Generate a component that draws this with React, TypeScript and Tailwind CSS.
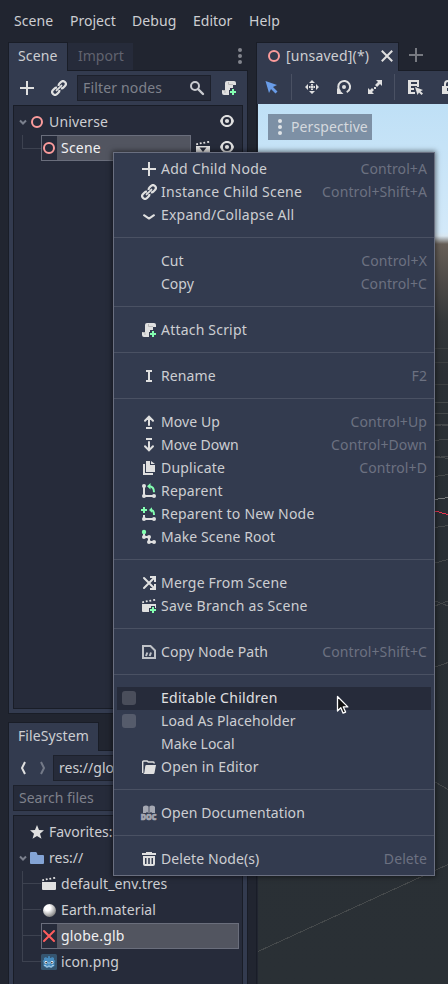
import type { ReactNode } from "react";

const LIGHT = "#e0e0e0";
const GREEN = "#84ffb1";

function Icon({ children, className = "" }: { children: ReactNode; className?: string }) {
  return (
    <svg viewBox="0 0 16 16" width="16" height="16" fill={LIGHT} className={`shrink-0 ${className}`}>
      {children}
    </svg>
  );
}

const AddIcon = () => <Icon><path d="M7 1h2v6h6v2H9v6H7V9H1V7h6z" /></Icon>;

const LinkIcon = () => (
  <Icon>
    <g transform="rotate(-45 8 8)" fill="none" stroke={LIGHT} strokeWidth="2.2">
      <path d="M6.8 9.6a2.6 2.6 0 0 1-2.3 1.200H2.400a2.800 2.800 0 0 1 0-5.600h2.100a2.800 2.800 0 0 1 2.300 1.200" />
      <path d="M9.2 9.6a2.6 2.6 0 0 0 2.300 1.200h2.100a2.800 2.800 0 0 0 0-5.600h-2.100a2.800 2.800 0 0 0-2.300 1.200" />
      <path d="M4.5 8h7" strokeLinecap="round" strokeWidth="1.800" />
    </g>
  </Icon>
);

const ExpandIcon = () => (
  <Icon><path d="M3 8.2 8 11.6l5-3.4" fill="none" stroke={LIGHT} strokeWidth="2" strokeLinecap="round" strokeLinejoin="round" /></Icon>
);

const ScriptIcon = () => (
  <Icon>
    <path d="M6 1h7a2 2 0 0 1 2 2v2h-4v3H9v2H8v5H3a2 2 0 0 1-2-2v-3h3V3a2 2 0 0 1 2-2z" />
    <path d="M8 5h4v3H8z" />
    <path d="M7.500 2v2.500H12M1.500 10.500H4v2.500" fill="none" stroke="#b8b8b8" />
    <path d="M11 9h2v2h2v2h-2v2h-2v-2H9v-2h2z" fill={GREEN} />
  </Icon>
);

const RenameIcon = () => <Icon><path d="M5 2h6v2H9v8h2v2H5v-2h2V4H5z" /></Icon>;

const MoveUpIcon = () => (
  <Icon>
    <path d="M8 11V3M4 6.8 8 2.6l4 4.2" fill="none" stroke={LIGHT} strokeWidth="2" strokeLinecap="round" />
    <path d="M5 13h6v2H5z" />
  </Icon>
);

const MoveDownIcon = () => (
  <Icon>
    <path d="M8 5v8M4 9.2l4 4.2 4-4.2" fill="none" stroke={LIGHT} strokeWidth="2" strokeLinecap="round" />
    <path d="M5 1h6v2H5z" />
  </Icon>
);

const DuplicateIcon = () => (
  <Icon><path d="M5 1h4v4h5v7H5zM10 1v3h4zM2 4h2v9h8v2H2z" /></Icon>
);

const ReparentIcon = () => (
  <Icon>
    <path d="M3 3v10h10" fill="none" stroke={LIGHT} strokeWidth="2" />
    <circle cx="3" cy="3" r="2" /><circle cx="3" cy="13" r="2" /><circle cx="13" cy="13" r="2" />
    <path d="M8 3.2c3.6 0 5 2.2 5 6" fill="none" stroke={GREEN} strokeWidth="2" />
    <path d="M9.5 0v6.4L6 3.2z" fill={GREEN} />
  </Icon>
);

const ReparentNewIcon = () => (
  <Icon>
    <path d="M3 9v4h10" fill="none" stroke={LIGHT} strokeWidth="2" />
    <circle cx="3" cy="13" r="2" /><circle cx="13" cy="13" r="2" />
    <path d="M2 1h2v2h2v2H4v2H2V5H0V3h2z" fill={GREEN} />
    <path d="M10 4c2 0 3 1.2 3 5" fill="none" stroke={GREEN} strokeWidth="2" />
    <path d="M11 1.3v5.4L8 4z" fill={GREEN} />
  </Icon>
);

const RootIcon = () => (
  <Icon>
    <path d="M3 4v4h5v5h5" fill="none" stroke={LIGHT} strokeWidth="2" />
    <circle cx="3" cy="8" r="2" /><circle cx="8" cy="8" r="2" /><circle cx="8" cy="13" r="2" /><circle cx="13" cy="13" r="2" />
    <circle cx="3" cy="3" r="2.2" fill={GREEN} />
  </Icon>
);

const MergeIcon = () => (
  <Icon>
    <path d="m3 3 10 10M3 13 13 3" fill="none" stroke={LIGHT} strokeWidth="2" strokeLinecap="round" />
    <path d="M9 1h6v6h-2V3H9zM13 9h2v6H9v-2h4z" />
  </Icon>
);

const ClapperBody = () => (
  <path d="M1 3.5l1.8-.4.4 1.7-1.8.5zM4.6 2.6l1.8-.4.4 1.7-1.8.4zM8.2 2l1.8-.3.4 1.7-1.8.3zM12 1.3l2-.3.3 1.8-1.9.3zM1 6h14v7a1 1 0 0 1-1 1H2a1 1 0 0 1-1-1z" />
);

const ClapperIcon = () => <Icon><ClapperBody /></Icon>;
const SceneOpenIcon = () => <Icon><ClapperBody /><path d="M4.5 7.5h7L8 12z" fill="#262b3a" /></Icon>;
const SaveBranchIcon = () => (
  <Icon>
    <ClapperBody />
    <path d="M10 8h4v2h2v4h-2v2h-4v-2H8v-4h2z" fill="#333b4f" />
    <path d="M11 9h2v2h2v2h-2v2h-2v-2H9v-2h2z" fill={GREEN} />
  </Icon>
);

const CopyPathIcon = () => (
  <Icon>
    <path d="M2 2h7.5L14 6.5V14H2z" fill="none" stroke="#bfc2c7" strokeWidth="2" />
    <path d="m5 12 1.300-3.500M8.700 12l1.300-3.500" stroke="#bfc2c7" strokeWidth="2" />
  </Icon>
);

const OpenFolderIcon = () => (
  <Icon>
    <path d="M1.7 14V3q0-1 1-1h3q1 0 1.5 1h5q1 0 1 1.5" fill="none" stroke={LIGHT} strokeWidth="1.4" />
    <path d="M5.5 6H15l-1.5 8q-.2 1-1.2 1H2q1-.2 1.3-1.2l1-6.8q.2-1 1.2-1z" />
  </Icon>
);

const DocIcon = () => (
  <Icon className="overflow-visible">
    <path d="M2 1.800Q5-.5 7.600 1.600V8H6.600V7H5.400v1H2zM8.400 1.600Q11-.5 14 1.800V8h-3.400V7H9.400v1h-1z" fill="#a5a8b2" />
    <text x="-.2" y="15.400" textLength="15.600" lengthAdjust="spacingAndGlyphs" fontSize="7.800" fontWeight="900" fill="#a5a8b2" stroke="#a5a8b2" strokeWidth=".7" className="font-['Noto_Sans',sans-serif]">DOC</text>
  </Icon>
);

const TrashIcon = () => (
  <Icon>
    <path d="M1 2h4V1h6v1h4v2H1zM2 5h12v8a2 2 0 0 1-2 2H4a2 2 0 0 1-2-2z" />
    <path d="M4 7h1.500v6H4zM7.200 7h1.600v6H7.200zM10.500 7H12v6h-1.500z" fill="#333b4f" />
  </Icon>
);

const NodeIcon = () => <Icon><circle cx="8" cy="8" r="5" fill="none" stroke="#fc9c9c" strokeWidth="2" /></Icon>;

const EyeIcon = () => (
  <Icon className="relative -top-px">
    <path d="M8 2C4.500 2 2 4.600 1 8c1 3.400 3.500 6 7 6s6-2.600 7-6c-1-3.400-3.500-6-7-6z" />
    <circle cx="8" cy="8" r="4.100" fill="#262b3a" />
    <circle cx="8" cy="8" r="2.100" />
  </Icon>
);

const SearchIcon = () => (
  <Icon>
    <circle cx="6" cy="6" r="4" fill="none" stroke="#c9cbd0" strokeWidth="2" />
    <path d="m9 9 5 5" stroke="#c9cbd0" strokeWidth="2.400" strokeLinecap="round" />
  </Icon>
);

const Arrow = () => (
  <svg width="8" height="8" viewBox="0 0 8 8" className="shrink-0">
    <path d="m1 2.500 3 3 3-3" fill="none" stroke="#7b808d" strokeWidth="2" />
  </svg>
);

function Kebab({ color }: { color: string }) {
  return (
    <svg width="4" height="16" viewBox="0 0 4 16" fill={color} className="shrink-0">
      <circle cx="2" cy="2" r="2" /><circle cx="2" cy="8" r="2" /><circle cx="2" cy="14" r="2" />
    </svg>
  );
}

const SNUG = "tracking-[0.1px]";
const WIDE = "tracking-[0.2px]";
const WIDER = "tracking-[0.27px]";

type Entry = { label: string; fit?: string; key?: string; icon?: ReactNode; check?: boolean; hover?: boolean } | null;

const entries: Entry[] = [
  { label: "Add Child Node", fit: WIDER, key: "Control+A", icon: <AddIcon /> },
  { label: "Instance Child Scene", fit: WIDER, key: "Control+Shift+A", icon: <LinkIcon /> },
  { label: "Expand/Collapse All", fit: WIDE, icon: <ExpandIcon /> },
  null,
  { label: "Cut", key: "Control+X" },
  { label: "Copy", key: "Control+C" },
  null,
  { label: "Attach Script", fit: WIDE, icon: <ScriptIcon /> },
  null,
  { label: "Rename", fit: SNUG, key: "F2", icon: <RenameIcon /> },
  null,
  { label: "Move Up", fit: SNUG, key: "Control+Up", icon: <MoveUpIcon /> },
  { label: "Move Down", key: "Control+Down", icon: <MoveDownIcon /> },
  { label: "Duplicate", fit: WIDE, key: "Control+D", icon: <DuplicateIcon /> },
  { label: "Reparent", fit: WIDE, icon: <ReparentIcon /> },
  { label: "Reparent to New Node", fit: WIDE, icon: <ReparentNewIcon /> },
  { label: "Make Scene Root", fit: SNUG, icon: <RootIcon /> },
  null,
  { label: "Merge From Scene", fit: WIDE, icon: <MergeIcon /> },
  { label: "Save Branch as Scene", fit: WIDER, icon: <SaveBranchIcon /> },
  null,
  { label: "Copy Node Path", fit: SNUG, key: "Control+Shift+C", icon: <CopyPathIcon /> },
  null,
  { label: "Editable Children", fit: WIDER, check: true, hover: true },
  { label: "Load As Placeholder", fit: SNUG, check: true },
  { label: "Make Local" },
  { label: "Open in Editor", fit: WIDE, icon: <OpenFolderIcon /> },
  null,
  { label: "Open Documentation", fit: SNUG, icon: <DocIcon /> },
  null,
  { label: "Delete Node(s)", fit: SNUG, key: "Delete", icon: <TrashIcon /> },
];

function ContextMenu() {
  return (
    <div className="absolute left-[113px] top-[152px] h-[724px] w-[322px] border border-[#6a6f80] bg-[#333b4f] pt-[5px] shadow-[0_0_5px_1px_rgba(0,0,0,0.5)]">
      {entries.map((e, i) =>
        e === null ? (
          <div key={i} className="h-[23px] pt-[10px]"><div className="h-px bg-[#4a5163]" /></div>
        ) : (
          <div key={i} className={`mx-[3px] flex h-[23px] items-start pl-1 pr-1 leading-[21px] ${e.hover ? "bg-[#262b3a] text-[#e0e0e2]" : ""}`}>
            <div className="flex w-5 pl-[1px] pt-1">
              {e.check && <div className={`size-[14px] rounded-[3px] ${e.hover ? "bg-[#4a4e5b]" : "bg-[#555b6b]"}`} />}
            </div>
            <div className="flex w-5 pt-[3px]">{e.icon}</div>
            <span className={`whitespace-nowrap ${e.fit ?? ""}`}>{e.label}</span>
            {e.key && <span className="ml-auto tracking-[0.1px] text-[#6c7181]">{e.key}</span>}
          </div>
        ),
      )}
    </div>
  );
}

function MenuBar() {
  return (
    <div className="flex h-[42px] shrink-0 items-center pl-[14px]">
      <span className="w-14 tracking-[0.1px]">Scene</span>
      <span className="w-[62px]">Project</span>
      <span className="w-[61px] tracking-[0.1px]">Debug</span>
      <span className="w-14">Editor</span>
      <span className="tracking-[0.1px]">Help</span>
    </div>
  );
}

function SceneDock() {
  return (
    <div className="flex h-[672px] flex-col">
      <div className="flex h-[28px] items-start">
        <div className="z-10 flex h-[29px] w-[60px] items-center border border-b-0 border-[#191d27] bg-[#333b4f] pb-[2px] pl-[9px] tracking-[0.15px]">Scene</div>
        <div className="mt-px flex h-[27px] w-[65px] items-center bg-[#262b3a] pb-[2px] pl-[10px] text-[#61636f]">Import</div>
        <div className="ml-auto mr-[6px] mt-[6px]"><Kebab color="#82858d" /></div>
      </div>
      <div className="flex min-h-0 flex-1 flex-col border border-[#191d27] bg-[#333b4f] p-1">
        <div className="flex h-[26px] items-center">
          <div className="ml-[6px] flex w-8"><AddIcon /></div>
          <div className="flex w-[26px]"><LinkIcon /></div>
          <div className="flex h-[26px] w-[134px] items-center justify-between border border-[#1d212c] bg-[#262b3a] pl-[5px] pr-[5px] tracking-[0.17px] text-[#7e818b]">
            Filter nodes <SearchIcon />
          </div>
          <div className="ml-[10px] flex"><ScriptIcon /></div>
        </div>
        <div className="mt-1 flex-1 border border-[#191d27] bg-[#262b3a] pt-[3px]">
          <div className="flex h-[26px] items-center pl-[5px]">
            <Arrow />
            <div className="ml-[2px] flex w-5"><NodeIcon /></div>
            <span className="tracking-[0.15px]">Universe</span>
            <div className="ml-auto mr-[7px] flex"><EyeIcon /></div>
          </div>
          <div className="flex h-[26px] items-center pl-2">
            <div className="-mt-[13px] h-[14px] w-[19px] border-b border-l border-[#3d4250]" />
            <div className="flex h-[26px] w-[150px] items-center border border-[#6a6e7c] bg-[#525560] text-[#f0f0f2]">
              <div className="flex h-6 w-[15px] items-center bg-[#262b3a]"><div className="-ml-px"><NodeIcon /></div></div>
              <span className="ml-1 tracking-[0.2px]">Scene</span>
            </div>
            <div className="ml-1 flex w-6"><SceneOpenIcon /></div>
            <EyeIcon />
          </div>
        </div>
      </div>
    </div>
  );
}

const GodotIcon = () => (
  <svg width="16" height="16" viewBox="0 0 16 16">
    <rect width="16" height="16" rx="1.500" fill="#355570" />
    <path d="M3 4l2-1 1 1h1l.3-2h1.400L9 4h1l1-1 2 1v2l1.500 1-1 1v4L11 13.500H5L2.500 12V8L1.500 7 3 6z" fill="#478cbf" />
    <circle cx="5" cy="8.500" r="1.400" fill="#fff" /><circle cx="11" cy="8.500" r="1.400" fill="#fff" />
    <circle cx="5.200" cy="8.600" r=".9" fill="#414042" /><circle cx="10.800" cy="8.600" r=".9" fill="#414042" />
    <path d="M8 8v2M3 11.500h2V13h2v-1h2v1h2v-1.500h2" fill="none" stroke="#c5e0f3" strokeWidth=".7" />
  </svg>
);

const MaterialIcon = () => (
  <Icon>
    <defs>
      <radialGradient id="sphere" cx=".35" cy=".3" r=".75">
        <stop offset="0.300" stopColor="#fff" /><stop offset="1" stopColor="#7a7a7a" />
      </radialGradient>
    </defs>
    <circle cx="8.500" cy="8.500" r="6.500" fill="url(#sphere)" />
  </Icon>
);

function FileRow({ icon, label, selected = false, last = false }: { icon: ReactNode; label: string; selected?: boolean; last?: boolean }) {
  return (
    <div className="flex h-[26px] pl-2 tracking-[0.1px]">
      <div className={`w-[19px] border-l border-[#3d4250] ${last ? "h-[13px]" : "h-[26px]"}`}>
        <div className="h-[13px] border-b border-[#3d4250]" />
      </div>
      {selected ? (
        <div className="flex h-[26px] w-[198px] items-center border border-[#6a6e7c] bg-[#525560] text-[#f0f0f2]">
          <div className="flex h-6 w-[15px] items-center bg-[#262b3a]"><div className="-ml-px">{icon}</div></div>
          <span className="ml-1 tracking-[0.2px]">{label}</span>
        </div>
      ) : (
        <div className="flex items-center"><div className="flex w-5">{icon}</div>{label}</div>
      )}
    </div>
  );
}

function FileDock() {
  return (
    <div className="mt-2 flex min-h-0 flex-1 flex-col">
      <div className="z-10 flex h-[29px] w-[91px] items-center border border-b-0 border-[#191d27] bg-[#333b4f] pb-[2px] pl-[9px] tracking-[0.1px]">FileSystem</div>
      <div className="-mt-px flex min-h-0 flex-1 flex-col border border-b-0 border-[#191d27] bg-[#333b4f] p-1 pb-0">
        <div className="flex h-[26px] shrink-0 items-center">
          <svg width="40" height="16" viewBox="0 0 40 16" fill="none" strokeWidth="2">
            <path d="m12 2-3 6 3 6" stroke={LIGHT} />
            <path d="m28 2 3 6-3 6" stroke="#747a88" />
          </svg>
          <div className="flex h-[26px] flex-1 items-center border border-[#1d212c] bg-[#262b3a] pl-[5px]">res://globe.glb</div>
        </div>
        <div className="mt-1 flex h-[26px] shrink-0 items-center border border-[#1d212c] bg-[#262b3a] pl-[5px] text-[#7e818b]">Search files</div>
        <div className="mt-1 flex-1 border border-b-0 border-[#191d27] bg-[#262b3a] pt-[3px]">
          <div className="flex h-[26px] items-center pl-[15px]">
            <div className="flex w-5"><Icon><path d="m8 1 2 5 5 .3-4 3.500 1.500 5L8 12l-4.500 2.800L5 9.800 1 6.300 6 6z" /></Icon></div>
            Favorites:
          </div>
          <div className="flex h-[26px] items-center pl-[5px]">
            <Arrow />
            <div className="ml-[2px] flex w-5"><Icon><path d="M1 3q0-1 1-1h5l1 1q0 2 1 2h5q1 0 1 1v7q0 1-1 1H2q-1 0-1-1z" fill="#84a4d5" /></Icon></div>
            res://
          </div>
          <FileRow icon={<ClapperIcon />} label="default_env.tres" />
          <FileRow icon={<MaterialIcon />} label="Earth.material" />
          <FileRow icon={<Icon><path d="m3 3 10 10M13 3 3 13" stroke="#ff5d5d" strokeWidth="2" strokeLinecap="round" /></Icon>} label="globe.glb" selected />
          <FileRow icon={<GodotIcon />} label="icon.png" last />
        </div>
      </div>
    </div>
  );
}

function Toolbar() {
  return (
    <div className="flex h-[34px] shrink-0 items-center border-t border-[#191d27] bg-[#333b4f] pb-px">
      <div className="ml-[6px] flex w-7"><Icon><path d="M2.500 2 14 6l-4 2 4.500 4.500-2 2L8 10l-2 4z" fill="#699ce8" /></Icon></div>
      <div className="h-[26px] w-px bg-[#4a5163]" />
      <div className="ml-[12px] flex w-8">
        <Icon><path d="m8 1 3 3H5zM8 15l3-3H5zM1 8l3-3v6zM15 8l-3-3v6z" /><circle cx="8" cy="8" r="1.800" /><path d="M7 5h2v1H7zM7 10h2v1H7zM5 7h1v2H5zM10 7h1v2h-1z" /></Icon>
      </div>
      <div className="flex w-8">
        <Icon><path d="M4.200 12.200a5.900 5.900 0 1 1 6.500 1" fill="none" stroke={LIGHT} strokeWidth="2" /><path d="M1 9v6h6.500L5 12.500z" /><circle cx="8" cy="8" r="2" /></Icon>
      </div>
      <div className="flex w-[27px]">
        <Icon><path d="M9 1h6v6l-2-2-3 3-2-2 3-3zM7 15H1V9l2 2 2-2 2 2-2 2zM7 8h2v2H7z" /></Icon>
      </div>
      <div className="h-[26px] w-px bg-[#4a5163]" />
      <div className="ml-[12px] flex w-[33px]">
        <Icon><path d="M1 1h11v7h-2V7H4v2h3v2H4v2h4v2H1zM4 3v2h6V3z" fillRule="evenodd" /><path d="m8 8 8 3-2.500 1.200 2.500 2.300-1.500 1.500-2.500-2.500L10.500 16z" /></Icon>
      </div>
      <Icon><path d="M4 7V5a4 4 0 0 1 8 0v2h2v8H2V7zM6 7h4V5a2 2 0 0 0-4 0zM7 9h2v3H7z" fillRule="evenodd" /></Icon>
    </div>
  );
}

/** Sky, ground and the floor grid of the 3D view. */
function Viewport() {
  return (
    <div className="relative ml-px flex-1 overflow-hidden bg-[linear-gradient(180deg,#bfe0f6_0px,#d3e9f9_128px,#d8e6f0_132px,#665e57_140px,#4c4947_180px,#34373a_218px,#2b3035_270px,#292f35_400px,#2a3035_100%)]">
      <svg className="absolute left-0 top-0" width="190" height="880" viewBox="258 104 190 880" fill="none" stroke="#45494b" shapeRendering="crispEdges">
        <path d="M258 951.500 448 864.500M435 782l13 7.500M435 667l13-4.500M435 606l13-5M435 601l13 5M435 563l13-3.500M435 527.500l13-2M435 476.500l13-2M435 456l13 2.500M435 458l13-2M435 440.500l13-1.500M435 424l13 2M435 426l13-2M435 414l13-1M435 403l13-1" />
        <path d="M435 385l13-1M435 363l13-1M435 349l13-1" stroke="#3d4042" />
        <path d="m435 499.500 13-2" stroke="#787b7c" />
        <path d="m435 511 13 3.500" stroke="#e8334f" />
      </svg>
      <div className="ml-[10px] mt-[10px] flex h-[26px] w-[104px] items-center bg-[#7d90a5] pl-[10px]">
        <Kebab color="#dfe3e7" />
        <span className="ml-[9px] tracking-[0.1px] text-[#d5d9de]">Perspective</span>
      </div>
    </div>
  );
}

function MainArea() {
  return (
    <div className="ml-2 flex w-[200px] shrink-0 flex-col border-l border-[#191d27]">
      <div className="flex h-[28px] items-start">
        <div className="z-10 flex h-[29px] w-[142px] items-center border-r border-t border-[#191d27] bg-[#333b4f] pb-[2px] pl-[9px]">
          <div className="flex w-5"><NodeIcon /></div>
          <span className="tracking-[0.2px]">[unsaved](*)</span>
          <Icon className="ml-auto mr-[3px]"><path d="m3.500 3.500 9 9M12.500 3.500l-9 9" stroke={LIGHT} strokeWidth="2" strokeLinecap="square" /></Icon>
        </div>
        <svg width="16" height="16" viewBox="0 0 16 16" className="ml-[9px] mt-[5px]"><path d="M7 1h2v6h6v2H9v6H7V9H1V7h6z" fill="#777a81" /></svg>
      </div>
      <Toolbar />
      <Viewport />
    </div>
  );
}

export default function App() {
  return (
    <div className="relative flex h-[984px] w-[448px] flex-col overflow-hidden bg-[#212530] font-['Noto_Sans',sans-serif] text-[14px] leading-5 text-[#cdced2]">
      <MenuBar />
      <div className="flex min-h-0 flex-1">
        <div className="ml-2 flex w-[240px] shrink-0 flex-col">
          <SceneDock />
          <FileDock />
        </div>
        <MainArea />
      </div>
      <ContextMenu />
      <svg className="absolute left-[336px] top-[695px]" width="14" height="20" viewBox="0 0 14 20">
        <path d="M1.500 1.500v14.500l3.300-3.200 2.300 5.400 2.500-1.100-2.300-5.200h4.500z" fill="#111" stroke="#fff" strokeWidth="1.300" strokeLinejoin="round" />
      </svg>
    </div>
  );
}
